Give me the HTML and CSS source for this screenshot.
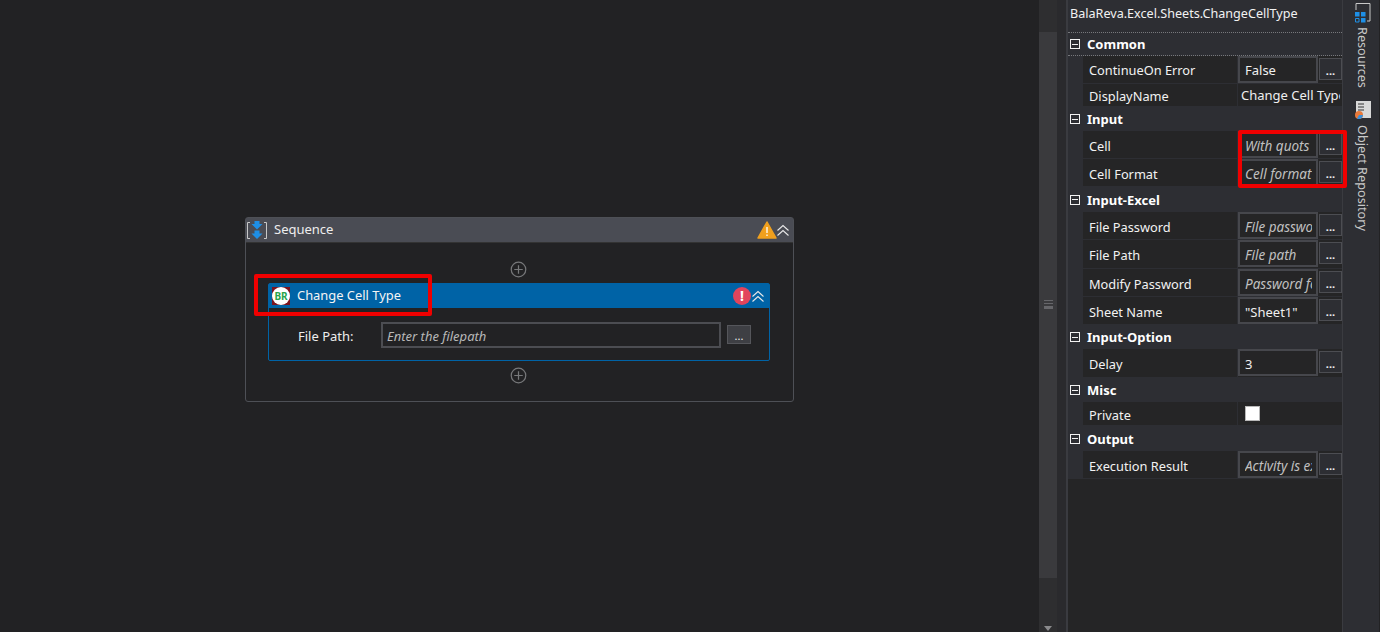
FILE: index.html
```html
<!DOCTYPE html>
<html lang="en">
<head>
    <meta charset="UTF-8">
    <title>Change Cell Type</title>
    <link rel="stylesheet" href="styles.css">
</head>
<body>
    <div class="app">
        <div class="canvas">
            <div class="sequence">
                <div class="seqhead">
                    <svg class="seqicon" width="20" height="20" viewBox="0 0 20 20">
                        <path d="M3 2.500H0.500V18.500H3M17 2.500H19.500V18.500H17" fill="none" stroke="#c8c8c8" stroke-width="1"/>
                        <path d="M7.500 1H12.500V4H15.500L10 9.500L4.500 4H7.500Z" fill="#1e8fe6"/>
                        <path d="M7.500 10.500H12.500V13.500H15.500L10 19L4.500 13.500H7.500Z" fill="#1e8fe6"/>
                    </svg>
                    <span class="seqtitle">Sequence</span>
                    <svg class="warn" width="20" height="18" viewBox="0 0 20 18">
                        <path d="M10 1L19 17H1Z" fill="#f0a01e" stroke="#f0a01e" stroke-width="1.500" stroke-linejoin="round"/>
                        <path d="M10 6V12M10 13.500V15" stroke="#fff" stroke-width="1.300"/>
                    </svg>
                    <svg class="chev" width="12" height="13" viewBox="0 0 12 13">
                        <path d="M0.500 6.500L6 1.500L11.500 6.500M0.500 11.500L6 6.500L11.500 11.500" fill="none" stroke="#e8e8e8" stroke-width="1.100"/>
                    </svg>
                </div>
                <div class="seqbody">
                    <svg class="plus" width="17" height="17" viewBox="0 0 18 18">
                        <circle cx="9" cy="9" r="7.700" fill="none" stroke="#77787a" stroke-width="1.300"/>
                        <path d="M4.500 9H13.500M9 4.500V13.500" stroke="#77787a" stroke-width="1.300"/>
                    </svg>
                    <div class="activity">
                        <div class="acthead">
                            <span class="badge">
                                <span class="badgetext">BR</span>
                            </span>
                            <span class="acttitle">Change Cell Type</span>
                            <span class="error">!</span>
                            <svg class="chev" width="12" height="13" viewBox="0 0 12 13">
                                <path d="M0.500 6.500L6 1.500L11.500 6.500M0.500 11.500L6 6.500L11.500 11.500" fill="none" stroke="#e8e8e8" stroke-width="1.100"/>
                            </svg>
                        </div>
                        <div class="actbody">
                            <span class="fieldlabel">File Path:</span>
                            <span class="field">Enter the filepath</span>
                            <span class="fieldbtn">...</span>
                        </div>
                    </div>
                    <svg class="plus" width="17" height="17" viewBox="0 0 18 18">
                        <circle cx="9" cy="9" r="7.700" fill="none" stroke="#77787a" stroke-width="1.300"/>
                        <path d="M4.500 9H13.500M9 4.500V13.500" stroke="#77787a" stroke-width="1.300"/>
                    </svg>
                </div>
            </div>
            <div class="redbox redbox1"></div>
        </div>

        <div class="scrollbar">
            <div class="thumb"><span class="grip"></span></div>
            <div class="arrow"></div>
        </div>
        <div class="gutter"></div>

        <div class="panel">
            <div class="paneltitle">BalaReva.Excel.Sheets.ChangeCellType</div>

            <div class="group first"><span class="toggle"></span>Common</div>
            <div class="row toprow"><span class="name">ContinueOn Error</span><span class="value"><span class="input"><span class="clip">False</span></span><span class="dots">...</span></span></div>
            <div class="row r23"><span class="name short">DisplayName</span><span class="value"><span class="plain">Change Cell Type</span></span></div>

            <div class="group"><span class="toggle"></span>Input</div>
            <div class="row"><span class="name">Cell</span><span class="value"><span class="input hint"><span class="clip">With quots</span></span><span class="dots">...</span></span></div>
            <div class="row"><span class="name">Cell Format</span><span class="value"><span class="input hint"><span class="clip">Cell format</span></span><span class="dots">...</span></span></div>

            <div class="group g25"><span class="toggle"></span>Input-Excel</div>
            <div class="row"><span class="name">File Password</span><span class="value"><span class="input hint"><span class="clip">File password</span></span><span class="dots">...</span></span></div>
            <div class="row r29"><span class="name">File Path</span><span class="value"><span class="input hint"><span class="clip">File path</span></span><span class="dots">...</span></span></div>
            <div class="row"><span class="name">Modify Password</span><span class="value"><span class="input hint"><span class="clip">Password for</span></span><span class="dots">...</span></span></div>
            <div class="row"><span class="name">Sheet Name</span><span class="value"><span class="input"><span class="clip">"Sheet1"</span></span><span class="dots">...</span></span></div>

            <div class="group"><span class="toggle"></span>Input-Option</div>
            <div class="row r29"><span class="name">Delay</span><span class="value"><span class="input"><span class="clip">3</span></span><span class="dots">...</span></span></div>

            <div class="group"><span class="toggle"></span>Misc</div>
            <div class="row r24"><span class="name private">Private</span><span class="value"><span class="check"></span></span></div>

            <div class="group g25"><span class="toggle"></span>Output</div>
            <div class="row"><span class="name">Execution Result</span><span class="value"><span class="input hint"><span class="clip">Activity is executed</span></span><span class="dots">...</span></span></div>

            <div class="rest"></div>
            <div class="redbox redbox2"></div>
        </div>

        <div class="strip">
            <div class="tab">
                <svg class="tabicon" width="16" height="26" viewBox="0 0 16 26">
                    <path d="M1 10V3.500H15V21M12 21H15" fill="none" stroke="#c8c8c8" stroke-width="1"/>
                    <path d="M0 12H4.500V16.500H0ZM6 12H10.500V16.500H6ZM6 18H10.500V22.500H6Z" fill="#1e8fe6"/>
                    <path d="M0.500 18.500H4V22H0.500Z" fill="none" stroke="#1e8fe6" stroke-width="1"/>
                </svg>
                <span class="tabtext">Resources</span>
            </div>
            <div class="tab tab2">
                <svg class="tabicon" width="18" height="20" viewBox="0 0 18 20">
                    <rect x="2" y="0" width="15" height="17" fill="#d8d8d8"/>
                    <path d="M4 3H10M4 6H10M4 9H10" stroke="#333" stroke-width="1"/>
                    <circle cx="5" cy="14" r="4" fill="#e8793a"/>
                    <path d="M5 14H9A4 4 0 0 1 3 17.500Z" fill="#3a8fd8"/>
                </svg>
                <span class="tabtext">Object Repository</span>
            </div>
        </div>
    </div>
</body>
</html>
```

FILE: styles.css
```css
html, body {
    margin: 0;
    padding: 0;
    height: 632px;
    overflow: hidden;
    background-color: #222224;
    font-family: "Noto Sans", "Open Sans", sans-serif;
    color: #f0f0f0;
}
.app {
    display: flex;
    height: 632px;
}

/* designer area */
.canvas {
    position: relative;
    width: 1039px;
    flex: none;
    padding: 217px 0 0 245px;
    box-sizing: border-box;
    background-color: #222224;
}
.sequence {
    width: 549px;
    height: 185px;
    box-sizing: border-box;
    border: 1px solid #4e5056;
    border-radius: 3px;
}
.seqhead {
    height: 25px;
    box-sizing: border-box;
    background-color: #4a4c54;
    border-bottom: 1px solid #333;
    display: flex;
    align-items: center;
    padding: 0 4px 0 1px;
}
.seqicon {
    flex: none;
    margin-right: 7px;
}
.seqtitle {
    font-size: 13px;
    color: #eee;
    flex: 1;
    padding-bottom: 2px;
}
.warn {
    flex: none;
}
.chev {
    flex: none;
    margin-left: 1px;
}
.warn + .chev {
    margin-left: 0;
}
.seqbody {
    display: flex;
    flex-direction: column;
    align-items: flex-start;
    padding-top: 18px;
}
.plus {
    flex: none;
    margin-left: 264px;
}
.activity {
    width: 502px;
    height: 78px;
    box-sizing: border-box;
    margin: 5px 0 6px 22px;
    border: 1px solid #0063a6;
    border-radius: 2px;
}
.acthead {
    height: 24px;
    background-color: #0063a6;
    display: flex;
    align-items: center;
    padding: 0 5px 0 3px;
}
.badge {
    width: 18px;
    height: 18px;
    flex: none;
    background-color: #7a1420;
    display: flex;
    align-items: center;
    justify-content: center;
}
.badgetext {
    width: 18px;
    height: 18px;
    border-radius: 50%;
    background-color: #fff;
    color: #2aa34a;
    font-size: 10px;
    font-weight: 700;
    line-height: 18px;
    text-align: center;
}
.acttitle {
    font-size: 12.900px;
    color: #f4f4f4;
    margin-left: 7px;
    flex: 1;
    padding-bottom: 3px;
}
.error {
    width: 18px;
    height: 18px;
    border-radius: 50%;
    background-color: #e2445c;
    color: #fff;
    font-size: 14px;
    font-weight: 700;
    line-height: 18px;
    text-align: center;
}
.actbody {
    display: flex;
    align-items: center;
    padding: 14px 0 0 29px;
}
.fieldlabel {
    width: 83px;
    padding-top: 1px;
    font-size: 13px;
    color: #eee;
}
.field {
    width: 340px;
    height: 26px;
    box-sizing: border-box;
    border: 2px solid #4c4d52;
    padding: 1px 0 0 4px;
    font-size: 13px;
    font-style: italic;
    line-height: 22px;
    color: #b8b8b8;
}
.fieldbtn {
    width: 24px;
    height: 19px;
    margin: -1px 0 0 6px;
    box-sizing: border-box;
    border: 1px solid #55565b;
    background-color: #3e3f44;
    font-size: 11px;
    line-height: 20px;
    text-align: center;
    color: #eee;
}
.redbox {
    position: absolute;
    box-sizing: border-box;
    border: 4px solid #f00000;
    border-radius: 2px;
}
.redbox1 {
    left: 254px;
    top: 274px;
    width: 178px;
    height: 42px;
}

/* scrollbar next to the canvas */
.scrollbar {
    width: 18px;
    flex: none;
    display: flex;
    flex-direction: column;
    background-color: #2e2e30;
    padding-top: 32px;
    box-sizing: border-box;
}
.thumb {
    height: 546px;
    background-color: #3a3a3d;
    display: flex;
    justify-content: center;
    padding-top: 268px;
    box-sizing: border-box;
}
.grip {
    width: 9px;
    height: 9px;
    border-top: 1px solid #66666a;
    border-bottom: 3px solid #66666a;
    box-sizing: border-box;
    background: linear-gradient(#3a3a3d 30%, #66666a 30%, #66666a 50%, #3a3a3d 50%);
}
.arrow {
    width: 0;
    height: 0;
    margin: 48px 0 0 5px;
    border-left: 4px solid transparent;
    border-right: 4px solid transparent;
    border-top: 5px solid #8a8a8c;
}
.gutter {
    width: 9px;
    flex: none;
    background-color: #2a2a2d;
}

/* properties */
.panel {
    position: relative;
    width: 277px;
    flex: none;
    box-sizing: border-box;
    display: flex;
    flex-direction: column;
    background-color: #2d2e33;
    border-left: 2px solid #3a3b40;
    border-right: 1px solid #3a3b40;
}
.paneltitle {
    height: 32px;
    box-sizing: border-box;
    padding: 5px 0 0 2px;
    font-size: 12.600px;
    color: #f2f2f2;
    white-space: nowrap;
}
.group {
    height: 24px;
    display: flex;
    align-items: center;
    font-size: 13px;
    font-weight: 700;
    color: #fff;
    box-sizing: border-box;
    padding-left: 2px;
}
.g25 {
    height: 25px;
}
.group.first {
    border-top: 1px dotted #77787c;
    border-bottom: 1px dotted #77787c;
}
.toggle {
    width: 10px;
    height: 10px;
    margin-right: 7px;
    border: 1px solid #f2f2f2;
    box-sizing: border-box;
    background: linear-gradient(#f2f2f2, #f2f2f2) center / 6px 1px no-repeat;
}
.row {
    height: 28px;
    margin-left: 15px;
    display: flex;
    background-color: #252526;
    border-bottom: 1px solid #2d2e33;
    box-sizing: border-box;
}
.r29 {
    height: 29px;
}
.r23 {
    height: 23px;
}
.r24 {
    height: 24px;
}
.name {
    width: 155px;
    flex: none;
    box-sizing: border-box;
    padding: 6px 0 0 6px;
    font-size: 12.800px;
    color: #f2f2f2;
    border-right: 1px solid #2d2e33;
}
.toprow .name {
    padding-top: 5px;
}
.name.short {
    padding-top: 3px;
}
.name.private {
    padding-top: 4px;
}
.value {
    flex: 1;
    min-width: 0;
    display: flex;
    overflow: hidden;
}
.input {
    width: 80px;
    flex: none;
    height: 27px;
    box-sizing: border-box;
    border: 2px solid #46474c;
    padding: 4px 4px 0 5px;
    font-size: 13px;
    color: #efefef;
}
.toprow .input {
    padding-top: 3px;
}
.clip {
    display: block;
    white-space: nowrap;
    overflow: hidden;
}
.hint {
    font-style: italic;
    font-size: 13.500px;
    color: #c0c0c0;
}
.plain {
    margin-right: 2px;
    padding: 2px 0 0 3px;
    font-size: 13px;
    white-space: nowrap;
    overflow: hidden;
    color: #efefef;
}
.dots {
    width: 23px;
    height: 22px;
    margin: 2px 0 0 1px;
    flex: none;
    box-sizing: border-box;
    border: 1px solid #4c4d52;
    background-color: #2d2e33;
    font-size: 11px;
    font-weight: 700;
    line-height: 23px;
    text-align: center;
}
.check {
    width: 15px;
    height: 15px;
    margin: 4px 0 0 7px;
    box-sizing: border-box;
    background-color: #fff;
    border: 1px solid #b8b8b8;
}
.rest {
    flex: 1;
    background-color: #252526;
}
.redbox2 {
    left: 170px;
    top: 130px;
    width: 109px;
    height: 58px;
    z-index: 2;
}

/* right side tabs */
.strip {
    width: 36px;
    flex: none;
    background-color: #2d2e33;
    box-sizing: border-box;
    display: flex;
    flex-direction: column;
    align-items: center;
    padding-left: 4px;
}
.tab {
    display: flex;
    flex-direction: column;
    align-items: center;
}
.tabicon {
    flex: none;
}
.tab2 {
    margin-top: 13px;
}
.tab .tabtext {
    margin-top: 1px;
}
.tab2 .tabtext {
    margin-top: 4px;
}
.tabtext {
    writing-mode: vertical-rl;
    font-size: 12.700px;
    color: #c8c8c8;
}
```
